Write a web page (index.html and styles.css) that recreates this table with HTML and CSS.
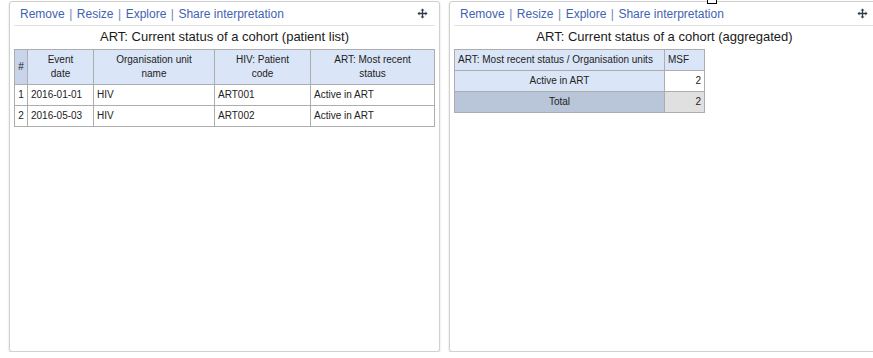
FILE: index.html
```html
<!DOCTYPE html>
<html lang="en">
<head>
  <meta charset="UTF-8" />
  <title>Dashboard</title>
  <link rel="stylesheet" href="styles.css">
</head>
<body>
  <div class="marker"></div>
  <div class="dashboard">
    <div class="item">
      <div class="item-bar">
        <div class="item-links">
          <a>Remove</a><span class="sep">|</span><a>Resize</a><span class="sep">|</span><a>Explore</a><span class="sep">|</span><a>Share interpretation</a>
        </div>
        <svg class="move" width="11" height="11" viewBox="0 0 11 11">
          <path d="M5.5 0.5 L3.5 2.5 H7.5 Z M5.5 10.5 L3.5 8.5 H7.5 Z M0.5 5.5 L2.5 3.5 V7.5 Z M10.5 5.5 L8.5 3.5 V7.5 Z" fill="#2f3a4d"/>
          <path d="M5.5 2 V9 M2 5.5 H9" stroke="#2f3a4d" stroke-width="1.3"/>
        </svg>
      </div>
      <div class="item-title">ART: Current status of a cohort (patient list)</div>
      <table class="grid list">
        <tr>
          <th class="num">#</th>
          <th class="c-date">Event<br>date</th>
          <th class="c-org">Organisation unit<br>name</th>
          <th class="c-code">HIV: Patient<br>code</th>
          <th class="c-status">ART: Most recent<br>status</th>
        </tr>
        <tr>
          <td class="num">1</td><td>2016-01-01</td><td>HIV</td><td>ART001</td><td>Active in ART</td>
        </tr>
        <tr>
          <td class="num">2</td><td>2016-05-03</td><td>HIV</td><td>ART002</td><td>Active in ART</td>
        </tr>
      </table>
    </div>

    <div class="item">
      <div class="item-bar">
        <div class="item-links">
          <a>Remove</a><span class="sep">|</span><a>Resize</a><span class="sep">|</span><a>Explore</a><span class="sep">|</span><a>Share interpretation</a>
        </div>
        <svg class="move" width="11" height="11" viewBox="0 0 11 11">
          <path d="M5.5 0.5 L3.5 2.5 H7.5 Z M5.5 10.5 L3.5 8.5 H7.5 Z M0.5 5.5 L2.5 3.5 V7.5 Z M10.5 5.5 L8.5 3.5 V7.5 Z" fill="#2f3a4d"/>
          <path d="M5.5 2 V9 M2 5.5 H9" stroke="#2f3a4d" stroke-width="1.3"/>
        </svg>
      </div>
      <div class="item-title">ART: Current status of a cohort (aggregated)</div>
      <table class="grid pivot">
        <tr>
          <th class="dim">ART: Most recent status / Organisation units</th>
          <th class="col-head">MSF</th>
        </tr>
        <tr>
          <th class="row-head">Active in ART</th>
          <td class="val">2</td>
        </tr>
        <tr>
          <th class="total-head">Total</th>
          <td class="val total">2</td>
        </tr>
      </table>
    </div>
  </div>
</body>
</html>
```

FILE: styles.css
```css
:root {
  --link: #3f63b3;
  --head-bg: #dae6f8;
  --dark-head: #c7d4e9;
  --total-bg: #b9c5d8;
  --cell-border: #adadad;
  --text: #222;
}

html, body {
  margin: 0;
  padding: 0;
  background: #fff;
  font-family: "Liberation Sans", Arial, sans-serif;
  color: var(--text);
  overflow: hidden;
}

.marker {
  position: absolute;
  left: 707px;
  top: -2px;
  width: 8px;
  height: 4px;
  border: 1px solid #000;
  background: #fff;
}

.dashboard {
  display: flex;
  gap: 9px;
  padding: 1px 0 0 9px;
}

.item {
  flex-shrink: 0;
  width: 431px;
  height: 351px;
  box-sizing: border-box;
  border: 1px solid #d0d0d0;
  border-radius: 3px;
  box-shadow: 0 1px 2px rgba(0, 0, 0, 0.18);
  background: #fff;
}

.item-bar {
  display: flex;
  align-items: center;
  justify-content: space-between;
  height: 23px;
  margin: 0 4px;
  padding: 0 7px 0 6px;
  border-bottom: 1px solid #e2e2e2;
}

.item-links {
  font-size: 12px;
  color: var(--link);
}

.item-links a {
  color: var(--link);
  cursor: pointer;
}

.item-links .sep {
  margin: 0 4.5px;
  color: #6d86c0;
}

.move {
  display: block;
}

.item-title {
  text-align: center;
  font-size: 13px;
  line-height: 22px;
  color: #1a1a1a;
  margin-bottom: 1px;
}

.grid {
  border-collapse: collapse;
  margin-left: 4px;
  font-size: 10px;
  line-height: 14px;
  color: #222;
}

.grid th,
.grid td {
  border: 1px solid var(--cell-border);
  padding: 3px 3px;
  font-weight: normal;
  white-space: nowrap;
}

.list {
  table-layout: fixed;
  width: 421px;
}

.list th {
  background: var(--head-bg);
  text-align: center;
}

.list td {
  text-align: left;
}

.list th.num {
  background: var(--dark-head);
}

.list .num {
  width: 6px;
  text-align: center;
}

.list .c-date { width: 59px; }
.list .c-org { width: 114px; }
.list .c-code { width: 89px; }

.pivot {
  width: 251px;
}

.pivot .dim,
.pivot .col-head {
  background: var(--head-bg);
  text-align: left;
}

.pivot .col-head {
  width: 33px;
}

.pivot .row-head {
  background: var(--head-bg);
  text-align: center;
}

.pivot .total-head {
  background: var(--total-bg);
  text-align: center;
}

.pivot .val {
  text-align: right;
}

.pivot .val.total {
  background: #e0e0e0;
}
```
